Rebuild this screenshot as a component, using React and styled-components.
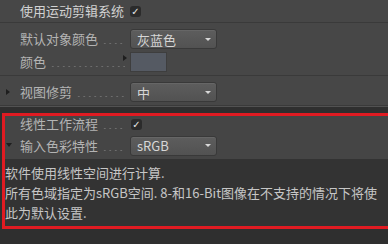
import React from "react";
import styled, { createGlobalStyle } from "styled-components";

const GlobalStyle = createGlobalStyle`
  html, body {
    margin: 0;
    padding: 0;
    background: #2f2f2f;
    overflow: hidden;
  }
  body {
    font-family: "Noto Sans CJK SC", "Noto Sans", sans-serif;
    font-size: 13px;
  }
`;

const Panel = styled.div`
  width: 388px;
  height: 244px;
  background: #2f2f2f;
  display: flex;
  flex-direction: column;
  overflow: hidden;
`;

const Section = styled.div`
  background: #474747;
  display: flex;
  flex-direction: column;
  padding: ${(p) => p.$pad || "0"};
  border-bottom: ${(p) => (p.$sep ? "1px solid #3a3a3a" : "none")};
  box-shadow: ${(p) => (p.$sep ? "0 1px 0 #525252" : "none")};
`;

const Row = styled.div`
  height: ${(p) => p.$h || 22}px;
  display: flex;
  align-items: center;
  position: relative;
  padding-left: ${(p) => p.$indent ?? 20}px;
  flex-shrink: 0;
`;

const Label = styled.div`
  width: 110px;
  display: flex;
  align-items: center;
  color: ${(p) => (p.$bright ? "#d2d2d2" : "#b4b4b4")};
  white-space: nowrap;
  line-height: 16px;
`;

const Leader = styled.span`
  flex: 1;
  height: 12px;
  margin: 0 5px 0 4px;
  background-image: radial-gradient(circle, #6d6d6d 0.7px, transparent 1.1px);
  background-size: 5.5px 3px;
  background-repeat: repeat-x;
  background-position: left bottom;
`;

const Arrow = styled.span`
  position: absolute;
  left: ${(p) => p.$left}px;
  top: ${(p) => p.$top}px;
  width: 0;
  height: 0;
  border-style: solid;
  ${(p) =>
    p.$down
      ? "border-width: 4px 3px 0 3px; border-color: #1e1e1e transparent transparent transparent;"
      : "border-width: 3px 0 3px 4px; border-color: transparent transparent transparent #1e1e1e;"}
`;

const Check = styled.span`
  width: 11px;
  height: 11px;
  border-radius: 3px;
  background: #2b2b2b;
  color: #e8e8e8;
  font-family: "DejaVu Sans", sans-serif;
  font-size: 10px;
  line-height: 11px;
  text-align: center;
  margin-left: ${(p) => p.$ml || 0}px;
`;

const Dropdown = styled.div`
  width: 87px;
  height: 20px;
  box-sizing: border-box;
  border-radius: 3px;
  border: 1px solid #393939;
  background: linear-gradient(#5d5d5d, #525252);
  box-shadow: inset 0 1px 0 #666;
  display: flex;
  align-items: center;
  justify-content: space-between;
  padding: 0 5px 0 6px;
  color: #d6d6d6;
  font-size: 13px;
`;

const Caret = styled.span`
  width: 0;
  height: 0;
  border-style: solid;
  border-width: 3px 3px 0 3px;
  border-color: #d8d8d8 transparent transparent transparent;
`;

const Swatch = styled.div`
  width: 37px;
  height: 20px;
  background: #555a63;
  border: 1px solid #3e3e3e;
  box-sizing: border-box;
`;

const Highlight = styled.div`
  margin: 7px 0 0 2px;
  border: 3px solid #e01b22;
  border-right: none;
  display: flex;
  flex-direction: column;
  background: #454545;
`;

const Description = styled.div`
  background: #333333;
  color: #c6c6c6;
  font-size: 13px;
  line-height: 20px;
  padding: 4px 0 3px 0;
  white-space: nowrap;
  overflow: hidden;
`;

const Line = styled.div``;

const DropRow = ({ label, value, arrow, indent }) => (
  <Row $h={22} $indent={indent}>
    {arrow && <Arrow $left={6} $top={8} $down={arrow === "down"} />}
    <Label>
      {label}
      <Leader />
    </Label>
    <Dropdown>
      <span>{value}</span>
      <Caret />
    </Dropdown>
  </Row>
);

export default function App() {
  return (
    <>
      <GlobalStyle />
      <Panel>
        <Section $sep>
          <Row $h={22}>
            <Label $bright>使用运动剪辑系统</Label>
            <Check>✓</Check>
          </Row>
        </Section>

        <Section $sep $pad="5px 0 2px 0">
          <DropRow label="默认对象颜色" value="灰蓝色" />
          <Row $h={23}>
            <Label>
              颜色
              <Leader />
            </Label>
            <Arrow $left={123} $top={5} />
            <Swatch />
          </Row>
        </Section>

        <Section $sep $pad="5px 0 2px 0">
          <DropRow label="视图修剪" value="中" arrow="right" />
        </Section>

        <Highlight>
          <Row $h={16} $indent={15}>
            <Label>
              线性工作流程
              <Leader />
            </Label>
            <Check $ml={1}>✓</Check>
          </Row>
          <Row $h={27} $indent={15}>
            <Arrow $left={1} $top={11} $down />
            <Label>
              输入色彩特性
              <Leader />
            </Label>
            <Dropdown>
              <span>sRGB</span>
              <Caret />
            </Dropdown>
          </Row>
          <Description>
            <Line>软件使用线性空间进行计算.</Line>
            <Line>所有色域指定为sRGB空间. 8-和16-Bit图像在不支持的情况下将使</Line>
            <Line>此为默认设置.</Line>
          </Description>
        </Highlight>
      </Panel>
    </>
  );
}
